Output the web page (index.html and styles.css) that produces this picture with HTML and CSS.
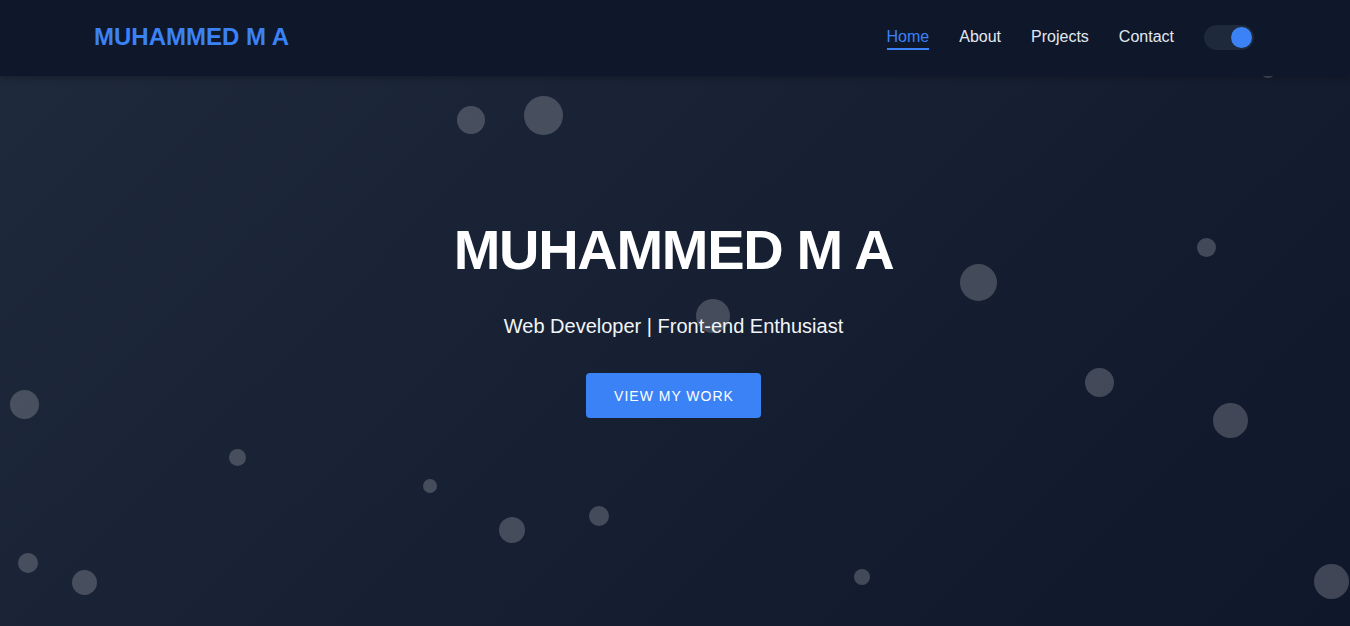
FILE: index.html
```html
<!DOCTYPE html>
<html lang="en">
<head>
<meta charset="utf-8">
<title>Muhammed M A</title>
<link rel="stylesheet" href="styles.css">
</head>
<body>
<header class="navbar">
  <a class="logo" href="#">MUHAMMED M A</a>
  <nav class="nav">
    <a class="nav-link active" href="#">Home</a>
    <a class="nav-link" href="#">About</a>
    <a class="nav-link" href="#">Projects</a>
    <a class="nav-link" href="#">Contact</a>
    <span class="toggle"><span class="knob"></span></span>
  </nav>
</header>
<section class="hero">
  <div class="bubbles">
    <span class="bubble" style="left:457px;top:30px;width:28px;height:28px"></span>
    <span class="bubble" style="left:524px;top:20px;width:39px;height:39px"></span>
    <span class="bubble" style="left:696px;top:223px;width:34px;height:34px"></span>
    <span class="bubble" style="left:960px;top:188px;width:37px;height:37px"></span>
    <span class="bubble" style="left:1197px;top:162px;width:19px;height:19px"></span>
    <span class="bubble" style="left:1085px;top:292px;width:29px;height:29px"></span>
    <span class="bubble" style="left:1213px;top:327px;width:35px;height:35px"></span>
    <span class="bubble" style="left:1314px;top:488px;width:35px;height:35px"></span>
    <span class="bubble" style="left:10px;top:314px;width:29px;height:29px"></span>
    <span class="bubble" style="left:229px;top:373px;width:17px;height:17px"></span>
    <span class="bubble" style="left:423px;top:403px;width:14px;height:14px"></span>
    <span class="bubble" style="left:499px;top:441px;width:26px;height:26px"></span>
    <span class="bubble" style="left:589px;top:430px;width:20px;height:20px"></span>
    <span class="bubble" style="left:18px;top:477px;width:20px;height:20px"></span>
    <span class="bubble" style="left:72px;top:494px;width:25px;height:25px"></span>
    <span class="bubble" style="left:854px;top:493px;width:16px;height:16px"></span>
    <span class="bubble" style="left:1260px;top:-14px;width:16px;height:16px"></span>
  </div>
  <div class="hero-content">
    <h1 class="hero-title">MUHAMMED M A</h1>
    <p class="hero-subtitle">Web Developer | Front-end Enthusiast</p>
    <a class="btn" href="#">VIEW MY WORK</a>
  </div>
</section>
</body>
</html>
```

FILE: styles.css
```css
* { box-sizing: border-box; }
html, body { margin: 0; padding: 0; }
body {
  font-family: "Liberation Sans", Arial, sans-serif;
  background: #0f172a;
  color: #e2e8f0;
  overflow: hidden;
  height: 626px;
}
a { text-decoration: none; }

.navbar {
  position: relative;
  z-index: 5;
  height: 76px;
  background: #0f172a;
  display: flex;
  align-items: center;
  justify-content: space-between;
  padding: 0 96px 0 94px;
  box-shadow: 0 2px 6px rgba(0, 0, 0, 0.25);
}
.logo {
  color: #3b82f6;
  font-size: 24px;
  font-weight: 700;
  line-height: 28px;
  margin-bottom: 2px;
}
.nav {
  display: flex;
  align-items: center;
  gap: 30px;
}
.nav-link {
  color: #e2e8f0;
  font-size: 16px;
  line-height: 18px;
  position: relative;
  margin-bottom: 2px;
}
.nav-link.active { color: #3b82f6; }
.nav-link.active::after {
  content: "";
  position: absolute;
  left: 0;
  right: 0;
  bottom: -4px;
  height: 2px;
  background: #3b82f6;
}
.toggle {
  width: 50px;
  height: 25px;
  border-radius: 13px;
  background: #1e293b;
  position: relative;
  display: block;
  margin-bottom: 1px;
}
.knob {
  position: absolute;
  right: 2px;
  top: 2px;
  width: 21px;
  height: 21px;
  border-radius: 50%;
  background: #3b82f6;
}

.hero {
  position: relative;
  height: 550px;
  background: linear-gradient(135deg, #1e293b 0%, #0f172a 100%);
}
.bubbles {
  position: absolute;
  inset: 0;
  z-index: 0;
}
.bubble {
  position: absolute;
  border-radius: 50%;
  background: rgba(255, 255, 255, 0.2);
}
.hero-content {
  position: relative;
  z-index: 1;
  display: flex;
  flex-direction: column;
  align-items: center;
  padding-top: 140px;
  padding-right: 3px;
}
.hero-title {
  margin: 0;
  font-size: 56px;
  line-height: 67px;
  font-weight: 700;
  color: #ffffff;
  letter-spacing: -1.3px;
}
.hero-subtitle {
  margin: 31px 0 0;
  font-size: 20px;
  line-height: 24px;
  color: #f1f5f9;
}
.btn {
  margin-top: 35px;
  display: block;
  background: #3b82f6;
  color: #ffffff;
  font-size: 14px;
  letter-spacing: 1px;
  line-height: 17px;
  padding: 15px 27px 13px 28px;
  border-radius: 4px;
}
```
